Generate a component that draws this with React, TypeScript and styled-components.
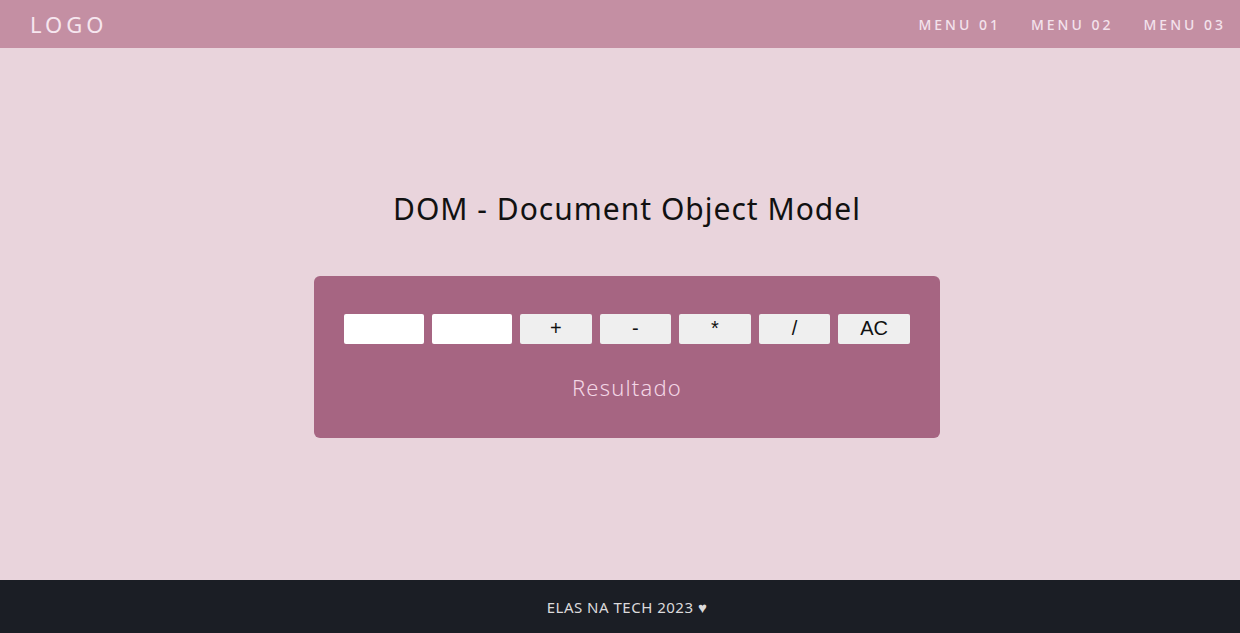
import React from "react";
import styled, { createGlobalStyle } from "styled-components";

const Global = createGlobalStyle`
  * { box-sizing: border-box; }
  html, body { margin: 0; padding: 0; }
  body { font-family: "Noto Sans", "Open Sans", sans-serif; background: #e9d4dc; }
`;

const Page = styled.div`
  min-height: 100vh;
  display: flex;
  flex-direction: column;
`;

const Header = styled.header`
  height: 48px;
  background: #c48fa3;
  display: flex;
  align-items: center;
  justify-content: space-between;
  padding: 0 14px 0 30px;
`;

const Logo = styled.div`
  color: #f6e6ef;
  font-size: 22px;
  letter-spacing: 4px;
  font-weight: 400;
`;

const Nav = styled.nav`
  display: flex;
  gap: 30px;
`;

const NavItem = styled.a`
  color: #f3e2ec;
  font-size: 14px;
  letter-spacing: 3px;
  font-weight: 500;
  text-decoration: none;
`;

const Main = styled.main`
  flex: 1;
  display: flex;
  flex-direction: column;
  align-items: center;
  justify-content: center;
  padding-left: 14px;
`;

const Title = styled.h1`
  margin: 0 0 49px;
  font-size: 30px;
  line-height: 36px;
  font-weight: 400;
  letter-spacing: 1px;
  color: #111;
`;

const Card = styled.section`
  width: 626px;
  background: #a66582;
  border-radius: 6px;
  padding: 38px 30px 38px;
  display: flex;
  flex-direction: column;
  align-items: center;
`;

const Row = styled.div`
  width: 100%;
  display: flex;
  gap: 8px;
`;

const Field = styled.input`
  width: 80px;
  height: 30px;
  border: none;
  background: #fff;
  border-radius: 2px;
  padding: 0 4px;
`;

const OpButton = styled.button`
  flex: 1;
  height: 30px;
  border: none;
  background: #efefef;
  border-radius: 2px;
  font-family: "Liberation Sans", Arial, sans-serif;
  font-size: 20px;
  color: #111;
  padding: 0;
`;

const Result = styled.div`
  margin-top: 30px;
  font-size: 22px;
  line-height: 26px;
  letter-spacing: 1.2px;
  color: #f3d6e5;
  font-weight: 300;
`;

const Footer = styled.footer`
  height: 53px;
  background: #1b1e25;
  display: flex;
  align-items: center;
  justify-content: center;
  padding-left: 14px;
  color: #dcdadc;
  font-size: 15px;
  letter-spacing: 0.5px;
`;

export default function App() {
  return (
    <Page>
      <Global />
      <Header>
        <Logo>LOGO</Logo>
        <Nav>
          <NavItem>MENU 01</NavItem>
          <NavItem>MENU 02</NavItem>
          <NavItem>MENU 03</NavItem>
        </Nav>
      </Header>
      <Main>
        <Title>DOM - Document Object Model</Title>
        <Card>
          <Row>
            <Field type="number" />
            <Field type="number" />
            <OpButton>+</OpButton>
            <OpButton>-</OpButton>
            <OpButton>*</OpButton>
            <OpButton>/</OpButton>
            <OpButton>AC</OpButton>
          </Row>
          <Result>Resultado</Result>
        </Card>
      </Main>
      <Footer>ELAS NA TECH 2023 ♥</Footer>
    </Page>
  );
}
